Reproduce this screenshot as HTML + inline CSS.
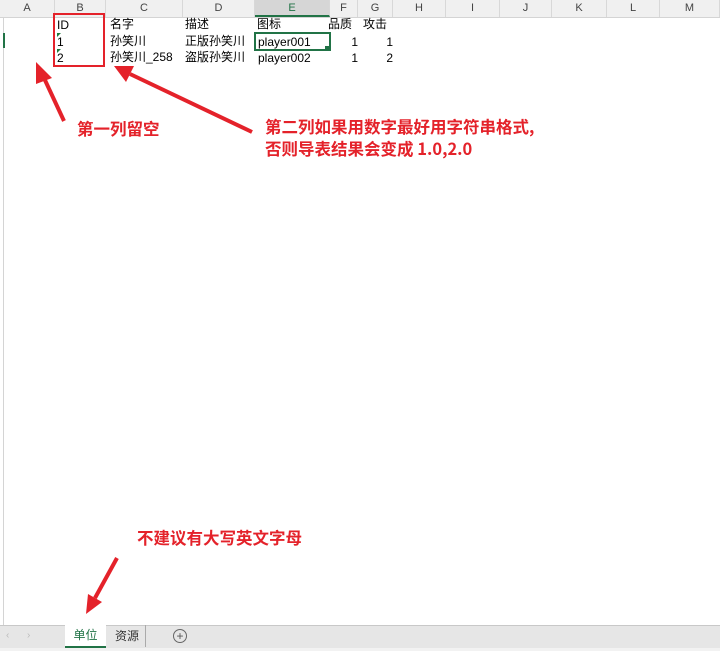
<!DOCTYPE html>
<html><head><meta charset="utf-8"><style>
body{margin:0;width:720px;height:651px;overflow:hidden;background:#fff;position:relative;font-family:"Liberation Sans","Noto Sans CJK SC",sans-serif;}
.hdr{position:absolute;top:0;left:0;width:720px;height:17px;background:#f0f0f0;border-bottom:1px solid #d4d4d4;}
.col{position:absolute;top:0;height:17px;line-height:17px;font-size:11px;color:#444;text-align:center;border-right:1px solid #d8d8d8;box-sizing:border-box;}
.c{position:absolute;font-size:12px;color:#000;line-height:16px;white-space:nowrap;}
.r{text-align:right;}
.red{position:absolute;color:#e4222a;font-weight:bold;font-size:16.5px;line-height:22px;white-space:nowrap;font-family:"Noto Sans CJK SC",sans-serif;}
.tri{position:absolute;width:0;height:0;border-top:4px solid #1f7a3a;border-right:4px solid transparent;}
</style></head><body>
<div class="hdr"></div>
<div class="col" style="left:0;width:55px">A</div>
<div class="col" style="left:55px;width:51px">B</div>
<div class="col" style="left:106px;width:77px">C</div>
<div class="col" style="left:183px;width:72px">D</div>
<div class="col" style="left:255px;width:75px;background:#d6d6d6;border-bottom:2px solid #217346;color:#217346">E</div>
<div class="col" style="left:330px;width:28px">F</div>
<div class="col" style="left:358px;width:35px">G</div>
<div class="col" style="left:393px;width:53px">H</div>
<div class="col" style="left:446px;width:54px">I</div>
<div class="col" style="left:500px;width:52px">J</div>
<div class="col" style="left:552px;width:55px">K</div>
<div class="col" style="left:607px;width:53px">L</div>
<div class="col" style="left:660px;width:60px">M</div>
<div style="position:absolute;left:3px;top:17px;width:1px;height:608px;background:#d4d4d4"></div>
<div style="position:absolute;left:3px;top:33px;width:2px;height:15px;background:#217346"></div>

<div class="c" style="left:57px;top:17px">ID</div>
<div class="c" style="left:110px;top:16px">名字</div>
<div class="c" style="left:185px;top:16px">描述</div>
<div class="c" style="left:257px;top:16px">图标</div>
<div class="c" style="left:328px;top:16px">品质</div>
<div class="c" style="left:363px;top:16px">攻击</div>
<div class="c" style="left:57px;top:34px">1</div>
<div class="tri" style="left:57px;top:33px"></div>
<div class="c" style="left:110px;top:33px">孙笑川</div>
<div class="c" style="left:185px;top:33px">正版孙笑川</div>
<div class="c" style="left:258px;top:34px">player001</div>
<div class="c r" style="left:330px;width:28px;top:34px">1</div>
<div class="c r" style="left:358px;width:35px;top:34px">1</div>
<div class="c" style="left:57px;top:50px">2</div>
<div class="tri" style="left:57px;top:49px"></div>
<div class="c" style="left:110px;top:49px">孙笑川_258</div>
<div class="c" style="left:185px;top:49px">盗版孙笑川</div>
<div class="c" style="left:258px;top:50px">player002</div>
<div class="c r" style="left:330px;width:28px;top:50px">1</div>
<div class="c r" style="left:358px;width:35px;top:50px">2</div>
<div style="position:absolute;left:254px;top:32px;width:73px;height:15px;border:2px solid #217346"></div>
<div style="position:absolute;left:325px;top:46px;width:4px;height:4px;background:#217346"></div>
<div style="position:absolute;left:53px;top:13px;width:48px;height:50px;border:2px solid #e4222a"></div>

<svg style="position:absolute;left:0;top:0" width="720" height="651">
<g stroke="#e4222a" stroke-width="4" fill="#e4222a">
<line x1="64" y1="121" x2="44" y2="78"/>
<polygon points="36,62 52,78 36,84" stroke="none"/>
<line x1="252" y1="132" x2="130" y2="74"/>
<polygon points="114,66 134,66 126,82" stroke="none"/>
<line x1="117" y1="558" x2="95" y2="598"/>
<polygon points="86,614 88,594 102,602" stroke="none"/>
</g></svg>

<div class="red" style="left:77px;top:117px">第一列留空</div>
<div class="red" style="left:265px;top:115px">第二列如果用数字最好用字符串格式,</div>
<div class="red" style="left:265px;top:137px">否则导表结果会变成 1.0,2.0</div>
<div class="red" style="left:137px;top:526px">不建议有大写英文字母</div>

<div style="position:absolute;left:0;top:625px;width:720px;height:23px;background:#e6e6e6;border-top:1px solid #c8c8c8"></div>
<div style="position:absolute;left:0;top:648px;width:720px;height:3px;background:#f2f2f2"></div>
<div style="position:absolute;left:6px;top:630px;font-size:10px;color:#bbb">‹</div>
<div style="position:absolute;left:27px;top:630px;font-size:10px;color:#bbb">›</div>
<div style="position:absolute;left:65px;top:624px;width:41px;height:22px;background:#fff;border-bottom:2px solid #217346;color:#217346;font-size:12px;line-height:22px;text-align:center;font-family:'Noto Sans CJK SC',sans-serif">单位</div>
<div style="position:absolute;left:109px;top:625px;width:36px;height:22px;color:#333;font-size:12px;line-height:22px;text-align:center;font-family:'Noto Sans CJK SC',sans-serif;border-right:1px solid #aaa">资源</div>
<div style="position:absolute;left:173px;top:629px;width:12px;height:12px;border:1px solid #666;border-radius:50%;font-size:12px;line-height:12px;text-align:center;color:#555">+</div>
</body></html>
